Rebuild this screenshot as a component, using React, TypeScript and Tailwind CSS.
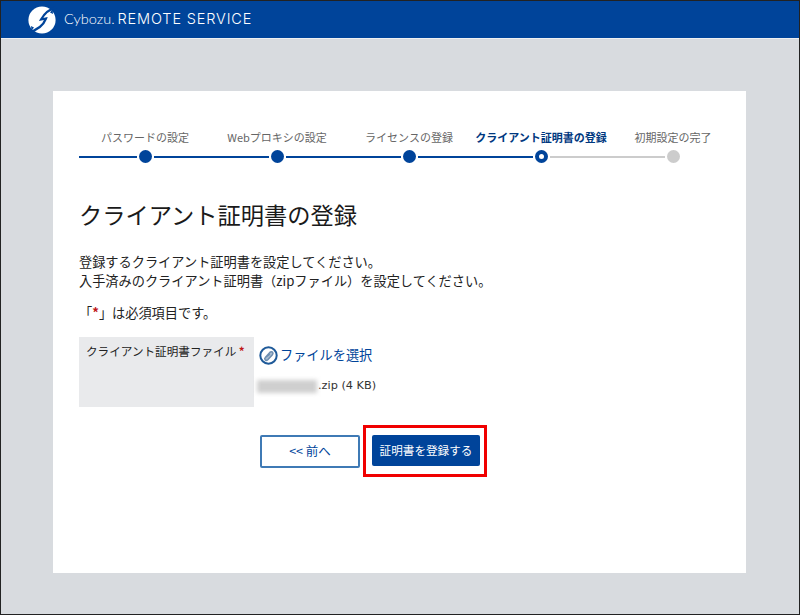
const FONT = '"Noto Sans CJK JP", "Noto Sans", sans-serif';

const steps = [
  { label: 'パスワードの設定', state: 'done' },
  { label: 'Webプロキシの設定', state: 'done' },
  { label: 'ライセンスの登録', state: 'done' },
  { label: 'クライアント証明書の登録', state: 'current' },
  { label: '初期設定の完了', state: 'todo' },
];

function Logo() {
  return (
    <svg width="30" height="30" viewBox="0 0 30 30" className="shrink-0">
      <circle cx="15" cy="15" r="13.6" fill="#fff" />
      <path
        d="M30 2C22 4 17.5 8 14 14.5L19 13.5C17 19 12 25 0 28"
        fill="none"
        stroke="#00449a"
        strokeWidth="2.2"
      />
      <path d="M23 7.5 25.5 4.5 26 9Z" fill="#00449a" />
      <path d="M7 22.5 4.5 25.5 4 21Z" fill="#00449a" />
    </svg>
  );
}

function ClipIcon() {
  return (
    <svg width="19" height="19" viewBox="0 0 19 19" className="shrink-0">
      <circle cx="9.5" cy="9.5" r="8.2" fill="#fff" stroke="#1f5a99" strokeWidth="2" />
      <path
        d="M6.3 11.5 10.8 6.4C11.8 5.4 13.2 5.5 13.7 6.3 14.2 7.2 14 8.2 13.2 9.1L8.8 13.7C7.9 14.5 6.8 14.5 6.1 13.8 5.5 13 5.6 12.2 6.3 11.5L10.8 8.2"
        fill="#a9bccf"
        stroke="#6d8db0"
        strokeWidth="1.5"
      />
    </svg>
  );
}

function StepDot({ state }: { state: string }) {
  if (state === 'current') {
    return (
      <span className="mx-[2px] flex h-[13px] w-[13px] shrink-0 items-center justify-center rounded-full bg-[#00449a]">
        <span className="h-[5px] w-[5px] rounded-full bg-white" />
      </span>
    );
  }
  return <span className={`mx-[2px] h-[13px] w-[13px] shrink-0 rounded-full ${state === 'todo' ? 'bg-[#cccccc]' : 'bg-[#00449a]'}`} />;
}

function Stepper() {
  return (
    <div className="grid w-[660px] grid-cols-5">
      {steps.map((step, i) => {
        const left = step.state === 'todo' ? 'bg-[#cccccc]' : 'bg-[#00449a]';
        const right = step.state === 'done' ? 'bg-[#00449a]' : 'bg-[#cccccc]';
        return (
          <div key={step.label} className="flex flex-col items-center">
            <div
              className={`h-[18px] whitespace-nowrap text-[11px] leading-[16px] ${
                step.state === 'current' ? 'font-bold text-[#00387f]' : 'text-[#666666]'
              }`}
            >
              {step.label}
            </div>
            <div className="mt-[3px] flex h-[13px] w-full items-center">
              <span className={`h-[2px] flex-1 ${left}`} />
              <StepDot state={step.state} />
              <span className={`h-[2px] flex-1 ${i === steps.length - 1 ? '' : right}`} />
            </div>
          </div>
        );
      })}
    </div>
  );
}

export default function App() {
  return (
    <div
      className="flex h-[615px] w-[800px] flex-col overflow-hidden border border-[#222222] bg-[#d8dbdf] text-[#222222]"
      style={{ fontFamily: FONT }}
    >
      <header className="flex h-[37px] shrink-0 items-center bg-[#00449a] pl-[26px]">
        <Logo />
        <span
          className="ml-[7px] text-[14.5px] font-light leading-none text-white"
          style={{ fontFamily: 'Lato, sans-serif' }}
        >
          Cybozu.
        </span>
        <span
          className="ml-[3px] text-[14.5px] font-light leading-none tracking-[0.85px] text-white"
          style={{ fontFamily: 'Inter, sans-serif' }}
        >
          REMOTE SERVICE
        </span>
      </header>
      <div className="h-px shrink-0 bg-[#eef0f2]" />

      <main className="ml-[52px] mt-[52px] h-[482px] w-[693px] bg-white pl-[26px] pt-[38px]">
        <Stepper />

        <h1 className="mt-[36px] text-[23.25px] font-normal leading-[30px] text-[#1a1a1a]">クライアント証明書の登録</h1>

        <div className="mt-[23px] text-[13.2px] leading-[19px]">
          <p>登録するクライアント証明書を設定してください。</p>
          <p>入手済みのクライアント証明書（zipファイル）を設定してください。</p>
        </div>

        <p className="mt-[13px] text-[13.2px] leading-[19px]">
          「<span className="font-bold text-[#c01818]">*</span>」は必須項目です。
        </p>

        <div className="mt-[15px] flex h-[70px]">
          <div className="h-full w-[175px] whitespace-nowrap bg-[#e9eaec] pl-[7px] pt-[5px] text-[11.6px] leading-[18px]">
            クライアント証明書ファイル <span className="font-bold text-[#c01818]">*</span>
          </div>
          <div className="pl-[5px]">
            <div className="mt-[8px] flex h-[20px] items-center gap-[2px] text-[#00449a]">
              <ClipIcon />
              <span className="whitespace-nowrap text-[13.2px] leading-[20px]">ファイルを選択</span>
            </div>
            <div className="mt-[14px] flex h-[15px] items-center">
              <span className="ml-[-2px] mr-px h-[13px] w-[60px] bg-[#cfcfcf] blur-[2px]" />
              <span className="whitespace-nowrap text-[11.3px] text-[#333333]" style={{ fontFamily: '"DejaVu Sans", sans-serif' }}>
                .zip (4 KB)
              </span>
            </div>
          </div>
        </div>

        <div className="ml-[181px] mt-[18px] flex items-center">
          <button className="h-[33px] w-[100px] rounded-[2px] border-2 border-[#3f7ab5] bg-white text-[12.5px] text-[#00449a]">
            &lt;&lt; 前へ
          </button>
          <div className="ml-[3px] border-[3px] border-[#f00000] pb-[8px] pl-[6px] pr-[4px] pt-[7px]">
            <button className="block h-[31px] w-[108px] rounded-[2px] bg-[#00449a] text-[11.6px] text-white">
              証明書を登録する
            </button>
          </div>
        </div>
      </main>
    </div>
  );
}
